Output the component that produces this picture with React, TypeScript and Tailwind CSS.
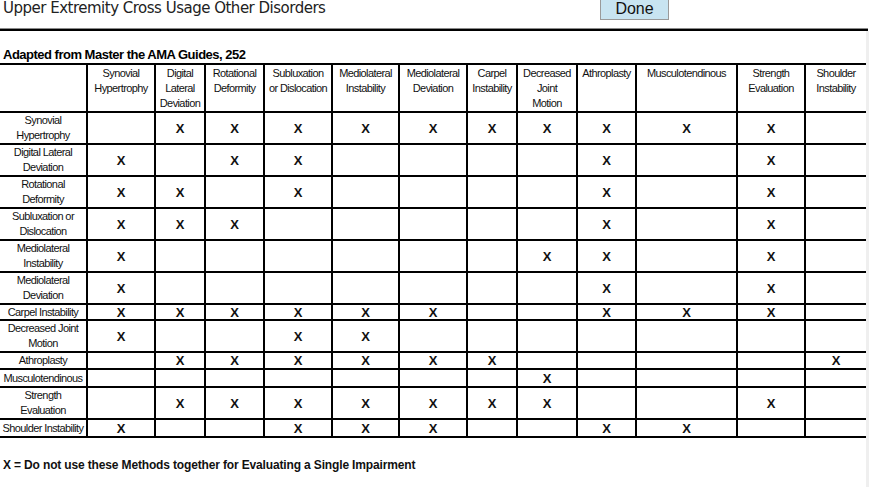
const cols = [
  { label: "Synovial\nHypertrophy", w: 68 },
  { label: "Digital\nLateral\nDeviation", w: 50 },
  { label: "Rotational\nDeformity", w: 59 },
  { label: "Subluxation\nor Dislocation", w: 68 },
  { label: "Mediolateral\nInstability", w: 67 },
  { label: "Mediolateral\nDeviation", w: 68 },
  { label: "Carpel\nInstability", w: 50 },
  { label: "Decreased\nJoint\nMotion", w: 60 },
  { label: "Athroplasty", w: 59 },
  { label: "Musculotendinous", w: 101 },
  { label: "Strength\nEvaluation", w: 68 },
  { label: "Shoulder\nInstability", w: 61 },
];

// one string per row, "x" marks a conflict, "." an empty cell
const rows = [
  { label: "Synovial\nHypertrophy", h: 30, marks: ".xxxxxxxxxx." },
  { label: "Digital Lateral\nDeviation", h: 31, marks: "x.xx....x.x." },
  { label: "Rotational\nDeformity", h: 31, marks: "xx.x....x.x." },
  { label: "Subluxation or\nDislocation", h: 32, marks: "xxx.....x.x." },
  { label: "Mediolateral\nInstability", h: 32, marks: "x......xx.x." },
  { label: "Mediolateral\nDeviation", h: 32, marks: "x.......x.x." },
  { label: "Carpel Instability", h: 16, marks: "xxxxxx..xxx." },
  { label: "Decreased Joint\nMotion", h: 32, marks: "x..xx......." },
  { label: "Athroplasty", h: 17, marks: ".xxxxxx....x" },
  { label: "Musculotendinous", h: 18, marks: ".......x...." },
  { label: "Strength\nEvaluation", h: 31, marks: ".xxxxxxx..x." },
  { label: "Shoulder Instability", h: 18, marks: "x..xxx..xx.." },
];

const sans = "font-['Liberation_Sans',Arial,sans-serif]";

export default function App() {
  return (
    <div className="w-[874px] h-[487px] bg-white overflow-hidden text-black">
      <div className="flex h-[28px]">
        <h1 className="w-[600px] pl-[3px] text-[15px] leading-[17px] text-[#222] font-['DejaVu_Sans',sans-serif] tracking-[-0.5px]">
          Upper Extremity Cross Usage Other Disorders
        </h1>
        <button className="w-[69px] h-[21px] -mt-px bg-[#c8e4f1] border border-t-0 border-[#9a9a9a] text-[16px] leading-[20px] text-[#111] font-['Liberation_Sans',sans-serif]">
          Done
        </button>
      </div>
      <div className="w-[868px] border-t border-[#8a8a8a]" />
      <div className="w-[868px] border-t-2 border-black" />

      <div className="flex">
        <div className="w-[866px]">
          <p className={`${sans} font-bold text-[13px] leading-[16px] pl-[3px] pt-[16px] tracking-[-0.5px]`}>
            Adapted from Master the AMA Guides, 252
          </p>
          <table className={`${sans} w-[866px] table-fixed border-collapse text-[11px] leading-[15px] tracking-[-0.6px] text-[#111]`}>
            <colgroup>
              <col className="w-[87px]" />
              {cols.map((c) => (
                <col key={c.label} style={{ width: c.w }} />
              ))}
            </colgroup>
            <thead>
              <tr className="h-[47px]">
                <th className="border-y-2 border-r-2 border-black" />
                {cols.map((c, i) => (
                  <th
                    key={c.label}
                    className={`font-normal align-top text-center whitespace-pre-line px-0 pt-[1px] border-y-2 border-black ${
                      i === cols.length - 1 ? "" : "border-r-2"
                    }`}
                  >
                    {c.label}
                  </th>
                ))}
              </tr>
            </thead>
            <tbody>
              {rows.map((r) => (
                <tr key={r.label} style={{ height: r.h }}>
                  <td
                    className={`text-center align-middle px-0 whitespace-pre-line border-y-2 border-r-2 border-black ${
                      r.label.includes("\n") ? "leading-[15px]" : "leading-[13px]"
                    }`}
                  >
                    {r.label}
                  </td>
                  {r.marks.split("").map((m, j) => (
                    <td
                      key={j}
                      className={`text-center align-middle font-bold text-[13px] leading-[13px] tracking-normal border-y-2 border-black ${
                        j === cols.length - 1 ? "" : "border-r-2"
                      }`}
                    >
                      {m === "x" ? "X" : ""}
                    </td>
                  ))}
                </tr>
              ))}
            </tbody>
          </table>
          <p className="pl-[3px] pt-[20px] font-bold text-[12px] leading-[14px] tracking-[-0.15px] text-[#111] font-['Liberation_Sans',sans-serif]">
            X = Do not use these Methods together for Evaluating a Single Impairment
          </p>
        </div>
        <div className="w-[3px] bg-[#efefef] h-[460px]" />
      </div>
    </div>
  );
}
